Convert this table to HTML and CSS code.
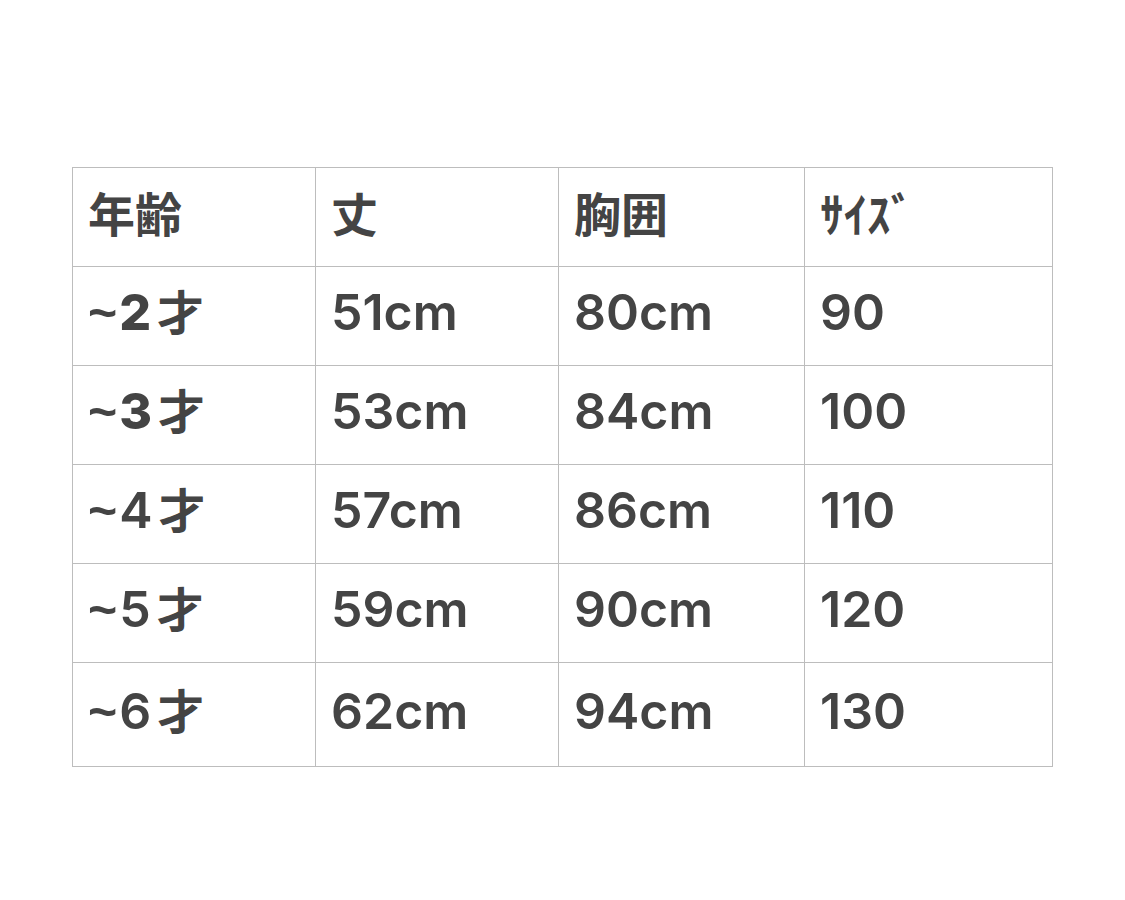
FILE: index.html
```html
<!DOCTYPE html>
<html lang="ja">
<head>
<meta charset="utf-8">
<link rel="stylesheet" href="styles.css">
</head>
<body>
<div class="page">
<table class="size-table">
  <colgroup>
    <col class="c1"><col class="c2"><col class="c3"><col class="c4">
  </colgroup>
  <tr class="row head"><td><span class="ja">年齢</span></td><td><span class="ja">丈</span></td><td><span class="ja">胸囲</span></td><td><span class="ja">ｻｲｽﾞ</span></td></tr>
  <tr class="row"><td><span class="strong"><span class="tilde">~</span>2</span><span class="ja sai">才</span></td><td>51cm</td><td>80cm</td><td>90</td></tr>
  <tr class="row"><td><span class="strong"><span class="tilde">~</span>3</span><span class="ja sai">才</span></td><td>53cm</td><td>84cm</td><td>100</td></tr>
  <tr class="row"><td><span class="tilde">~</span>4<span class="ja sai">才</span></td><td>57cm</td><td>86cm</td><td>110</td></tr>
  <tr class="row"><td><span class="tilde">~</span>5<span class="ja sai">才</span></td><td>59cm</td><td>90cm</td><td>120</td></tr>
  <tr class="row last"><td><span class="tilde">~</span>6<span class="ja sai">才</span></td><td>62cm</td><td>94cm</td><td>130</td></tr>
</table>
</div>
</body>
</html>
```
FILE: styles.css
```css
html, body {
  margin: 0;
  padding: 0;
  background: #ffffff;
}
.page {
  padding: 167px 0 0 72px;
}
.size-table {
  border-collapse: collapse;
  table-layout: fixed;
  width: 981px;
  font-family: Inter, "Liberation Sans", "Noto Sans CJK JP", sans-serif;
  font-weight: 600;
  font-size: 50px;
  color: #444444;
}
.c1 { width: 243px; }
.c2 { width: 243px; }
.c3 { width: 246px; }
.c4 { width: 248px; }
.size-table td {
  border: 1px solid #bdbdbd;
  padding: 0 16px 8px 15px;
  box-sizing: border-box;
  vertical-align: middle;
  line-height: 1;
  white-space: nowrap;
}
.row td { height: 99px; }
.row.last td { height: 104px; }
.ja {
  font-family: "Noto Sans CJK JP", sans-serif;
  font-weight: 700;
  font-size: 47px;
}
.tilde {
  font-family: "Liberation Sans", sans-serif;
  font-weight: 700;
  margin-right: 2px;
}
.sai {
  margin-left: 6px;
}
.strong {
  font-weight: 800;
}
```
